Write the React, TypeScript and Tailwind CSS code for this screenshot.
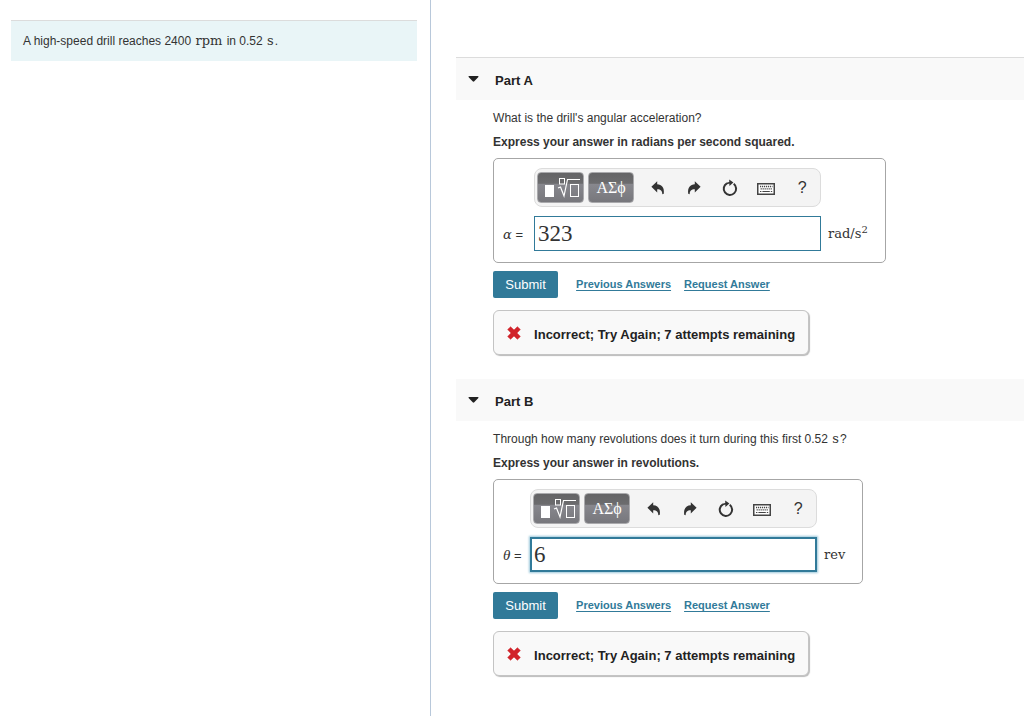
import React, { useState } from "react";
import clsx from "clsx";

interface Part {
  id: string;
  title: string;
  question: React.ReactNode;
  instruction: string;
  symbol: string;
  unit: React.ReactNode;
  initial: string;
  active?: boolean;
}

const mathFont = "font-['DejaVu_Serif','Liberation_Serif',serif]";
const fieldFont = "font-['Liberation_Serif',serif]";

function MathText({ children }: { children: React.ReactNode }) {
  return <span className={`${mathFont} mx-px text-[13px] leading-none`}>{children}</span>;
}

const parts: Part[] = [
  {
    id: "a",
    title: "Part A",
    question: "What is the drill's angular acceleration?",
    instruction: "Express your answer in radians per second squared.",
    symbol: "α",
    unit: (
      <>
        rad/s<sup className="text-[10px]">2</sup>
      </>
    ),
    initial: "323",
  },
  {
    id: "b",
    title: "Part B",
    question: (
      <>
        Through how many revolutions does it turn during this first 0.52 <MathText>s</MathText>?
      </>
    ),
    instruction: "Express your answer in revolutions.",
    symbol: "θ",
    unit: "rev",
    initial: "6",
    active: true,
  },
];

function TemplateIcon() {
  return (
    <svg width="40" height="24" viewBox="0 0 40 24" fill="none" stroke="#fff" className="shrink-0">
      <rect x="4" y="9" width="9" height="12" fill="#fff" stroke="none" />
      <rect x="18.5" y="2.5" width="5" height="5.5" />
      <path d="M17 12l2.5-1 3.5 9 3.500-16.500H39" strokeWidth="1.2" />
      <rect x="29.5" y="8.5" width="8" height="12" />
    </svg>
  );
}

function UndoIcon({ flip = false }: { flip?: boolean }) {
  return (
    <svg width="14" height="14" viewBox="0 0 14 14" className={clsx(flip && "-scale-x-100")}>
      <path d="M6.2.2v3.1c4.5.2 7.4 3.2 6.6 9.4l-1.5.6c0-3.3-1.5-4.9-5.1-5v3.1L.4 5.7z" fill="#333" />
    </svg>
  );
}

function ResetIcon() {
  return (
    <svg width="16" height="18" viewBox="0 0 16 18">
      <path d="M11.7 4.8a6.200 6.200 0 1 1-6.800-.5" fill="none" stroke="#333" strokeWidth="2" />
      <path d="M7.2.6l4.200 3-4 3.400z" fill="#333" />
      <path d="M4.6 4.6l3.800-1.200" stroke="#333" strokeWidth="1.6" />
    </svg>
  );
}

function KeyboardIcon() {
  return (
    <svg width="18" height="12" viewBox="0 0 18 12">
      <rect x=".75" y=".75" width="16.5" height="10.5" fill="#fff" stroke="#444" strokeWidth="1.5" />
      <path d="M3 3.5h12.5M3.6 5.8h12" stroke="#444" strokeWidth="1.3" strokeDasharray="1.2 .8" />
      <path d="M3 8.5h1.4M5.4 8.5h7.4M13.8 8.5h1.4" stroke="#444" strokeWidth="1.2" />
    </svg>
  );
}

function CrossIcon() {
  return (
    <svg width="14" height="14" viewBox="0 0 14 14">
      <path
        d="M3.6.8L7 4.1 10.4.8l2.9 2.7L9.9 7l3.4 3.5-2.9 2.7L7 9.9l-3.4 3.3-2.9-2.7L4.1 7 .7 3.5z"
        fill="#d1232a"
        stroke="#d1232a"
        strokeWidth=".6"
        strokeLinejoin="round"
      />
    </svg>
  );
}

function Toolbar() {
  const dark =
    "flex h-[31px] items-center justify-center rounded-[4px] border border-[#aaaaad] bg-[linear-gradient(#646466_0%,#6c6c6e_36%,#88888e_37%,#77777c_100%)] text-white";
  const plain = "flex h-[31px] w-9 items-center justify-center";
  return (
    <div className="flex h-[39px] items-center rounded-lg border border-[#dcdcdc] bg-[#f4f4f4] pl-0.5">
      <button type="button" aria-label="Templates" className={clsx(dark, "mr-1 w-[47px]")}>
        <TemplateIcon />
      </button>
      <button type="button" aria-label="Symbols" className={clsx(dark, fieldFont, "mr-1.5 w-[46px] text-base leading-none")}>
        ΑΣϕ
      </button>
      <button type="button" aria-label="Undo" className={plain}>
        <UndoIcon />
      </button>
      <button type="button" aria-label="Redo" className={plain}>
        <UndoIcon flip />
      </button>
      <button type="button" aria-label="Reset" className={plain}>
        <ResetIcon />
      </button>
      <button type="button" aria-label="Keyboard shortcuts" className={clsx(plain, "pt-0.5")}>
        <KeyboardIcon />
      </button>
      <button type="button" aria-label="Help" className={clsx(plain, "text-base leading-none")}>
        ?
      </button>
    </div>
  );
}

function PartSection({ part }: { part: Part }) {
  const [answer, setAnswer] = useState(part.initial);
  const [open, setOpen] = useState(true);
  const inputId = `answer-${part.id}`;

  return (
    <section className="mb-6">
      <h2 className={clsx("bg-[#f9f9f9]", part.id === "a" && "border-t border-[#dcdcdc]")}>
        <button
          type="button"
          aria-expanded={open}
          onClick={() => setOpen(!open)}
          className="flex h-[42px] w-full items-center gap-4 pl-3 text-left text-[13px] font-bold text-[#222]"
        >
          <svg width="11" height="6" viewBox="0 0 11 6">
            <path d="M1 0h9a.6.6 0 0 1 .4 1L6.3 5.3a1.1 1.1 0 0 1-1.6 0L.6 1A.6.6 0 0 1 1 0z" fill="#222" />
          </svg>
          <span className="pt-[3px]">{part.title}</span>
        </button>
      </h2>

      {open && (
        <form className="pl-[37px]" onSubmit={(e) => e.preventDefault()}>
          <p className="mt-2.5 text-xs leading-4">{part.question}</p>
          <p className="mt-2 text-xs leading-4 font-bold">{part.instruction}</p>

          <div className="mt-2 w-fit rounded-[5px] border border-[#a6a6a6] px-[9px] pt-[9px] pb-[11px]">
            <div className="grid grid-cols-[auto_287px_auto] items-center gap-y-[9px]">
              <div className="col-start-2 row-start-1">
                <Toolbar />
              </div>
              <label
                htmlFor={inputId}
                className={clsx(
                  "col-start-1 row-start-2 pt-0.5 text-[13px]",
                  part.id === "a" ? "w-[31px]" : "w-[27px]",
                )}
              >
                <i className={clsx(part.id === "a" ? mathFont : fieldFont, part.id === "b" && "text-[15px]")}>{part.symbol}</i> =
              </label>
              <input
                id={inputId}
                value={answer}
                onChange={(e) => setAnswer(e.target.value)}
                className={clsx(
                  fieldFont,
                  "col-start-2 row-start-2 h-[35px] w-full bg-white text-[23px] leading-none text-[#333] outline-none",
                  part.active
                    ? "border-2 border-[#317a99] pl-0.5 shadow-[0_0_2px_1px_#9cc8da]"
                    : "border border-[#317a99] pl-[3px]",
                )}
              />
              <span className={clsx(mathFont, "col-start-3 row-start-2 pr-2 pl-[7px] text-[13px] leading-none")}>{part.unit}</span>
            </div>
          </div>

          <div className="mt-2 flex items-center">
            <button type="submit" className="h-[27px] w-[65px] rounded-[2px] bg-[#317a99] text-[13px] text-white">
              Submit
            </button>
            <a href="#previous" className="ml-[18px] text-[11px] font-bold text-[#317a99] underline underline-offset-2">
              Previous Answers
            </a>
            <a href="#request" className="ml-[13px] text-[11px] font-bold text-[#317a99] underline underline-offset-2">
              Request Answer
            </a>
          </div>

          <div className="mt-3 flex h-[45px] w-fit items-center gap-[13px] rounded-md border border-[#c4c4c4] bg-[#f9f9f9] px-[13px] shadow-[1px_1px_1px_#bbb]">
            <CrossIcon />
            <strong className="pt-1 text-[13px] text-[#222]">Incorrect; Try Again; 7 attempts remaining</strong>
          </div>
        </form>
      )}
    </section>
  );
}

export default function App() {
  return (
    <div className="flex min-h-screen bg-white font-['Liberation_Sans',Arial,sans-serif] text-[#333]">
      <aside className="w-[42%] shrink-0 pt-5 pr-[13px] pl-[11px]">
        <p className="border-t border-[#dcdcdc] bg-[#e9f5f7] px-3 py-3 text-xs leading-4">
          A high-speed drill reaches 2400 <MathText>rpm</MathText> in 0.52 <MathText>s</MathText>.
        </p>
      </aside>
      <main className="min-w-0 flex-1 border-l border-[#b8c8da] pt-[57px] pl-[25px]">
        {parts.map((part) => (
          <PartSection key={part.id} part={part} />
        ))}
      </main>
    </div>
  );
}
